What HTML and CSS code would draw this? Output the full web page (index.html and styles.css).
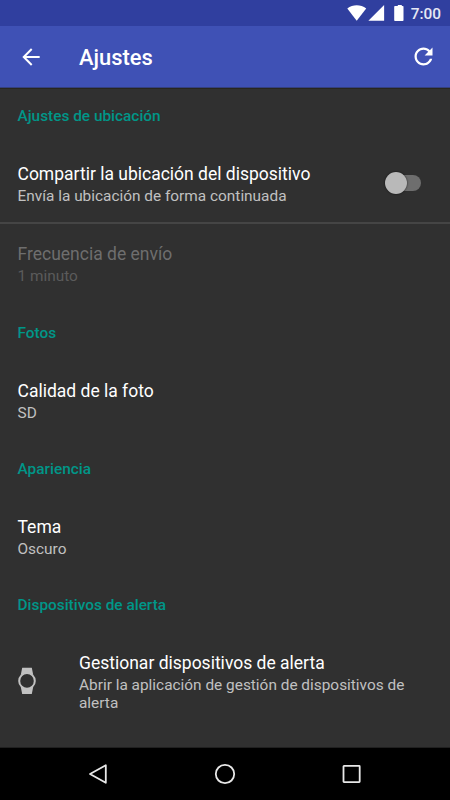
FILE: index.html
```html
<!DOCTYPE html>
<html lang="es">
  <head>
    <meta charset="UTF-8" />
    <meta name="viewport" content="width=device-width, initial-scale=1.0" />
    <title>Ajustes</title>
    <link rel="stylesheet" href="styles.css">
  </head>
  <body>
    <div class="status-bar">
      <svg width="57" height="18" viewBox="0 0 57 18" fill="#fff">
        <path d="M0.3 4.6C5.8 0.2 13.7 0.2 19.2 4.6L9.7 16.8Z" />
        <path d="M37.1 1.1V16.8H21.4Z" />
        <path d="M48.8 2h2V0.9h4v1.1h0.9q0.8 0 0.8 0.6v13.6q0 0.8-0.8 0.8h-7.7q-0.8 0-0.8-0.8V2.8q0-0.8 0.8-0.8Z" />
      </svg>
      <span class="clock">7:00</span>
    </div>

    <header class="toolbar">
      <button class="icon-btn" aria-label="Atrás">
        <svg width="26" height="26" viewBox="0 0 24 24" fill="#fff">
          <path d="M20 11.1H7.6l5.7-5.8L12 4l-8 8 8 8 1.3-1.3L7.6 12.9H20v-1.8z" />
        </svg>
      </button>
      <h1>Ajustes</h1>
      <button class="icon-btn" aria-label="Actualizar">
        <svg width="27" height="27" viewBox="0 0 24 24" fill="#fff">
          <path d="M17.65 6.35C16.2 4.9 14.21 4 12 4c-4.42 0-7.99 3.58-7.99 8s3.57 8 7.99 8c3.73 0 6.84-2.55 7.73-6h-2.08c-.82 2.33-3.04 4-5.65 4-3.31 0-6-2.69-6-6s2.69-6 6-6c1.66 0 3.14.69 4.22 1.78L13 11h7V4l-2.35 2.35z" />
        </svg>
      </button>
    </header>

    <main>
      <h2>Ajustes de ubicación</h2>
      <div class="row divided">
        <div class="text">
          <p class="title">Compartir la ubicación del dispositivo</p>
          <p class="summary">Envía la ubicación de forma continuada</p>
        </div>
        <div class="switch"><span class="thumb"></span></div>
      </div>
      <div class="row disabled">
        <div class="text">
          <p class="title">Frecuencia de envío</p>
          <p class="summary">1 minuto</p>
        </div>
      </div>

      <h2>Fotos</h2>
      <div class="row">
        <div class="text">
          <p class="title">Calidad de la foto</p>
          <p class="summary">SD</p>
        </div>
      </div>

      <h2>Apariencia</h2>
      <div class="row">
        <div class="text">
          <p class="title">Tema</p>
          <p class="summary">Oscuro</p>
        </div>
      </div>

      <h2>Dispositivos de alerta</h2>
      <div class="row">
        <svg class="watch" width="18" height="28" viewBox="0 0 18 28">
          <path d="M4.2 0.8h9.6l1.4 7H2.8zM2.8 20h12.4l-1.4 7H4.2z" fill="#c1c1c1" />
          <circle cx="9" cy="13.9" r="7.8" fill="#303030" stroke="#c1c1c1" stroke-width="2" />
        </svg>
        <div class="text">
          <p class="title">Gestionar dispositivos de alerta</p>
          <p class="summary">Abrir la aplicación de gestión de dispositivos de alerta</p>
        </div>
      </div>
    </main>

    <nav class="nav-bar">
      <svg width="22" height="22" viewBox="0 0 22 22">
        <path d="M18.8 2.2V19.8L3 11Z" />
      </svg>
      <svg width="22" height="22" viewBox="0 0 22 22">
        <circle cx="11" cy="11" r="9.2" />
      </svg>
      <svg width="22" height="22" viewBox="0 0 22 22">
        <rect x="2.5" y="2.9" width="16.2" height="16.2" rx="0.5" />
      </svg>
    </nav>
  </body>
</html>
```
FILE: styles.css
```css
* {
  box-sizing: border-box;
}

body {
  font-family: Roboto, sans-serif;
  margin: 0;
  height: 800px;
  background-color: #303030;
  color: #fff;
  display: flex;
  flex-direction: column;
  overflow: hidden;
}

h1,
h2,
p {
  margin: 0;
}

.status-bar {
  height: 26px;
  padding: 4px 9px 0 0;
  background-color: #303f9f;
  display: flex;
  justify-content: flex-end;
  gap: 7px;
}

.clock {
  font-size: 15.4px;
  font-weight: 500;
  line-height: 20px;
  color: #e6e8f4;
}

.toolbar {
  height: 62px;
  padding: 0 13px 0 18px;
  background-color: #3f51b5;
  border-bottom: 1px solid #34407f;
  box-shadow: 0 1px 0 #28261f;
  display: flex;
  align-items: center;
}

.toolbar h1 {
  flex: 1;
  margin-left: 35px;
  padding-top: 2px;
  font-size: 21.9px;
  font-weight: 500;
}

.icon-btn {
  display: flex;
  padding: 0;
  border: none;
  background: none;
}

main {
  flex: 1;
}

h2 {
  height: 55px;
  padding-left: 17.5px;
  font-size: 15.4px;
  font-weight: 500;
  line-height: 57px;
  color: #009688;
}

.row {
  min-height: 81px;
  padding: 20px 29px 0 17.5px;
  display: flex;
  align-items: flex-start;
}

.divided {
  border-bottom: 2px solid #454545;
}

.text {
  flex: 1;
}

.title {
  font-size: 17.5px;
  line-height: 22px;
}

.summary {
  margin-top: 2px;
  font-size: 15.4px;
  line-height: 18px;
  color: #c1c1c1;
}

.disabled {
  padding-top: 19px;
}

.disabled .title {
  color: #6e6e6e;
}

.disabled .summary {
  color: #5b5b5b;
}

.switch {
  width: 34px;
  height: 16px;
  margin-top: 12px;
  border-radius: 8px;
  background-color: #6e6e6e;
  display: flex;
  align-items: center;
}

.thumb {
  flex: none;
  width: 22px;
  height: 22px;
  margin-left: -2.5px;
  border-radius: 50%;
  background-color: #b9b9b9;
  box-shadow: 0 0 2px rgba(0, 0, 0, 0.8);
}

.watch {
  margin: 15px 43.5px 0 0;
}

.nav-bar {
  height: 53px;
  background-color: #000;
  border-top: 1px solid #202020;
  display: flex;
  justify-content: center;
  align-items: center;
  gap: 105px;
}

.nav-bar svg {
  fill: none;
  stroke: #e8e8e8;
  stroke-width: 1.8;
  stroke-linejoin: round;
}
```
